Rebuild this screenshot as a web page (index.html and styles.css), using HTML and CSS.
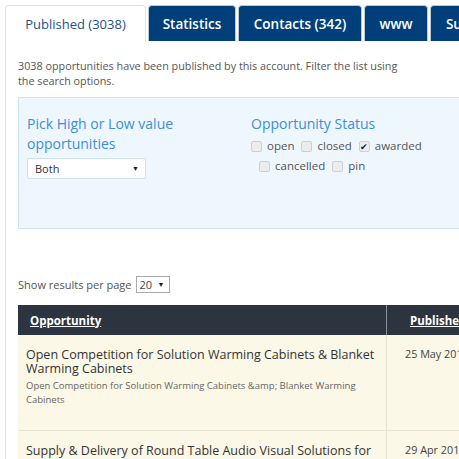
FILE: index.html
```html
<!DOCTYPE html>
<html>
<head>
<meta charset="utf-8">
<link rel="stylesheet" href="styles.css">
</head>
<body>
<div class="page">
  <nav class="tabs">
    <div class="tab active">Published (3038)</div>
    <div class="tab">Statistics</div>
    <div class="tab">Contacts (342)</div>
    <div class="tab">www</div>
    <div class="tab">Subscriptions</div>
  </nav>
  <section class="panel">
    <p class="intro">3038 opportunities have been published by this account. Filter the list using the search options.</p>
    <div class="filters">
      <div class="filter-col left">
        <h3 class="filter-title">Pick High or Low value opportunities</h3>
        <div class="select wide"><span>Both</span><span class="arrow">▼</span></div>
      </div>
      <div class="filter-col right">
        <h3 class="filter-title">Opportunity Status</h3>
        <div class="checks first">
          <label class="check"><span class="cb"></span>open</label>
          <label class="check"><span class="cb"></span>closed</label>
          <label class="check"><span class="cb checked">✔</span>awarded</label>
        </div>
        <div class="checks second">
          <label class="check"><span class="cb"></span>cancelled</label>
          <label class="check"><span class="cb"></span>pin</label>
        </div>
      </div>
    </div>
    <div class="perpage">Show results per page <div class="select small"><span>20</span><span class="arrow">▼</span></div></div>
    <div class="table">
      <div class="row head">
        <div class="cell c1"><a>Opportunity</a></div>
        <div class="cell c2"><a>Published</a></div>
      </div>
      <div class="row item">
        <div class="cell c1">
          <div class="title">Open Competition for Solution Warming Cabinets &amp; Blanket Warming Cabinets</div>
          <div class="desc">Open Competition for Solution Warming Cabinets &amp;amp; Blanket Warming Cabinets</div>
        </div>
        <div class="cell c2 date">25 May 2016</div>
      </div>
      <div class="row item">
        <div class="cell c1">
          <div class="title">Supply &amp; Delivery of Round Table Audio Visual Solutions for Meeting Rooms</div>
          <div class="desc">Supply &amp;amp; Delivery of Round Table Audio Visual Solutions</div>
        </div>
        <div class="cell c2 date">29 Apr 2016</div>
      </div>
    </div>
  </section>
</div>
</body>
</html>
```
FILE: styles.css
```css
html, body {
  margin: 0;
  padding: 0;
  overflow: hidden;
  background: #fff;
}
body {
  font-family: "Open Sans", "Liberation Sans", sans-serif;
  color: #555;
}
.page {
  width: 640px;
  padding: 5px 0 0 5px;
}
.tabs {
  display: flex;
  gap: 2px;
  height: 36px;
}
.tab {
  box-sizing: border-box;
  height: 36px;
  display: flex;
  align-items: center;
  justify-content: center;
  background: #013f7a;
  color: #fff;
  font-weight: 600;
  font-size: 13.5px;
  border: 1px solid #bcc7d3;
  border-bottom: none;
  border-radius: 4px 4px 0 0;
  white-space: nowrap;
}
.tab:nth-child(2) { width: 88px; }
.tab:nth-child(3) { width: 124px; }
.tab:nth-child(4) { width: 64px; }
.tab:nth-child(5) { width: 120px; }
.tab.active {
  width: 141px;
  background: #fff;
  color: #1f5186;
  font-weight: 400;
  font-size: 13px;
  border-color: #e2e2e2;
  height: 37px;
  position: relative;
  z-index: 1;
}
.panel {
  border-left: 1px solid #e2e2e2;
  padding: 17px 0 0 12px;
  height: 460px;
}
.intro {
  margin: 0;
  width: 392px;
  font-size: 10.8px;
  line-height: 15px;
}
.filters {
  margin-top: 9px;
  display: flex;
  background: #eef7fe;
  border: 1px solid #cbe4f6;
  height: 132px;
  box-sizing: border-box;
  padding: 16px 0 0 8px;
}
.filter-col.left { width: 224px; }
.filter-title {
  margin: 0;
  font-weight: 400;
  font-size: 14px;
  line-height: 20px;
  color: #3a8fd8;
}
.select {
  box-sizing: border-box;
  display: flex;
  align-items: center;
  justify-content: space-between;
  background: #fff;
  color: #333;
  font-size: 11px;
}
.select.wide {
  margin-top: 4px;
  width: 119px;
  height: 21px;
  border: 1px solid #cfe0ee;
  border-radius: 2px;
  padding: 0 6px 0 7px;
}
.arrow {
  font-size: 7px;
  color: #222;
}
.checks {
  display: flex;
  gap: 7px;
  font-size: 11.5px;
  line-height: 20px;
  color: #555;
}
.checks.first { margin-top: 2px; }
.checks.second { margin-left: 8px; }
.check {
  display: flex;
  align-items: center;
}
.cb {
  box-sizing: border-box;
  width: 11px;
  height: 11px;
  border: 1px solid #cfcfcf;
  border-radius: 2px;
  background: #ececec;
  margin-right: 5px;
  font-size: 9px;
  line-height: 9px;
  color: #222;
  text-align: center;
}
.perpage {
  margin-top: 47px;
  display: flex;
  align-items: center;
  font-size: 11px;
  color: #555;
}
.select.small {
  margin-left: 4px;
  width: 34px;
  height: 17px;
  border: 1px solid #aaa;
  padding: 0 4px 0 3px;
  color: #444;
}
.table {
  margin-top: 12px;
  width: 600px;
}
.row {
  display: flex;
}
.cell.c1 {
  box-sizing: border-box;
  width: 368px;
  padding-left: 8px;
}
.cell.c2 {
  flex: 1;
  border-left: 1px solid #e5e1d0;
  padding-left: 18px;
}
.row.head {
  background: #2c343f;
  height: 30px;
  align-items: stretch;
}
.row.head .cell {
  display: flex;
  align-items: center;
  color: #fff;
  font-weight: 700;
  font-size: 11.5px;
}
.row.head .c1 { padding-left: 12px; }
.row.head .c2 { border-left: 1px solid #8a9099; padding-left: 23px; }
.row.head a {
  text-decoration: underline;
}
.row.item {
  background: #fcf8e7;
  border-bottom: 1px solid #e8e4d3;
  height: 96px;
  box-sizing: border-box;
}
.row.item .cell { padding-top: 13px; }
.title {
  font-size: 12.5px;
  line-height: 14px;
  color: #333;
  width: 352px;
}
.desc {
  margin-top: 3px;
  font-size: 9.5px;
  line-height: 14px;
  color: #666;
  width: 330px;
}
.date {
  font-size: 10.8px;
  color: #444;
  padding-top: 11px !important;
}
```
